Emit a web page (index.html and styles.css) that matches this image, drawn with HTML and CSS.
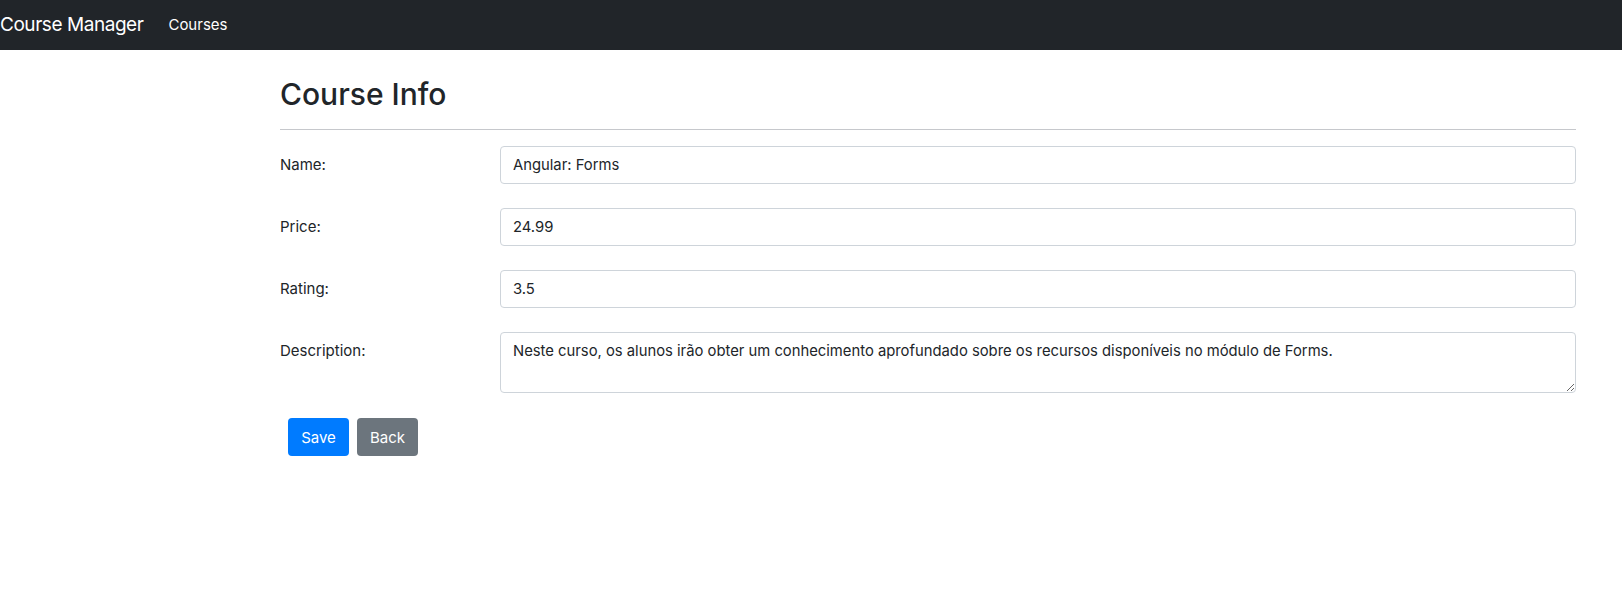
FILE: index.html
```
<!DOCTYPE html>
<html>
<head>
<meta charset="utf-8">
<link rel="stylesheet" href="styles.css">
</head>
<body>
<nav class="navbar">
  <span class="brand">Course Manager</span>
  <a class="nav-link">Courses</a>
</nav>
<main class="container">
  <h2 class="title">Course Info</h2>
  <hr class="divider">
  <form class="form">
    <div class="row">
      <label class="label">Name:</label>
      <input class="control" type="text" value="Angular: Forms">
    </div>
    <div class="row">
      <label class="label">Price:</label>
      <input class="control" type="text" value="24.99">
    </div>
    <div class="row">
      <label class="label">Rating:</label>
      <input class="control" type="text" value="3.5">
    </div>
    <div class="row">
      <label class="label">Description:</label>
      <textarea class="control area">Neste curso, os alunos irão obter um conhecimento aprofundado sobre os recursos disponíveis no módulo de Forms.</textarea>
    </div>
    <div class="actions">
      <button type="button" class="btn primary">Save</button>
      <button type="button" class="btn secondary">Back</button>
    </div>
  </form>
</main>
</body>
</html>
```
FILE: styles.css
```
* { box-sizing: border-box; }
body {
  margin: 0;
  font-family: Inter, "Noto Sans", sans-serif;
  font-size: 16px;
  line-height: 1.5;
  color: #212529;
  background: #fff;
}
.navbar {
  height: 50px;
  background: #212529;
  display: flex;
  align-items: center;
  padding: 0;
}
.brand {
  color: #fff;
  font-size: 19px;
  letter-spacing: -0.45px;
  line-height: 30px;
  margin-right: 25px;
}
.nav-link {
  color: #fff;
  font-size: 15px;
}
.container {
  margin-left: 280px;
  width: 1296px;
}
.title {
  margin: 26px 0 0 0;
  font-size: 30px;
  font-weight: 500;
  line-height: 1.2;
}
.divider {
  margin: 17px 0 16px 0;
  border: 0;
  border-top: 1px solid #c6c8cc;
}
.form {
  display: flex;
  flex-direction: column;
  gap: 24px;
}
.row {
  display: flex;
  align-items: flex-start;
}
.label {
  width: 220px;
  flex: none;
  padding-top: 7px;
  font-size: 15px;
  line-height: 24px;
}
.control {
  flex: 1;
  height: 38px;
  padding: 6px 12px;
  border: 1px solid #ced4da;
  border-radius: 4px;
  font-family: inherit;
  font-size: 14.8px;
  line-height: 24px;
  color: #212529;
}
.area {
  height: 61px;
  resize: vertical;
}
.actions {
  display: flex;
  gap: 8px;
  padding-left: 8px;
  margin-top: 1px;
}
.btn {
  width: 61px;
  height: 38px;
  border: none;
  border-radius: 4px;
  font-family: inherit;
  font-size: 15px;
  color: #fff;
}
.primary { background: #007bff; }
.secondary { background: #6c757d; }
```
